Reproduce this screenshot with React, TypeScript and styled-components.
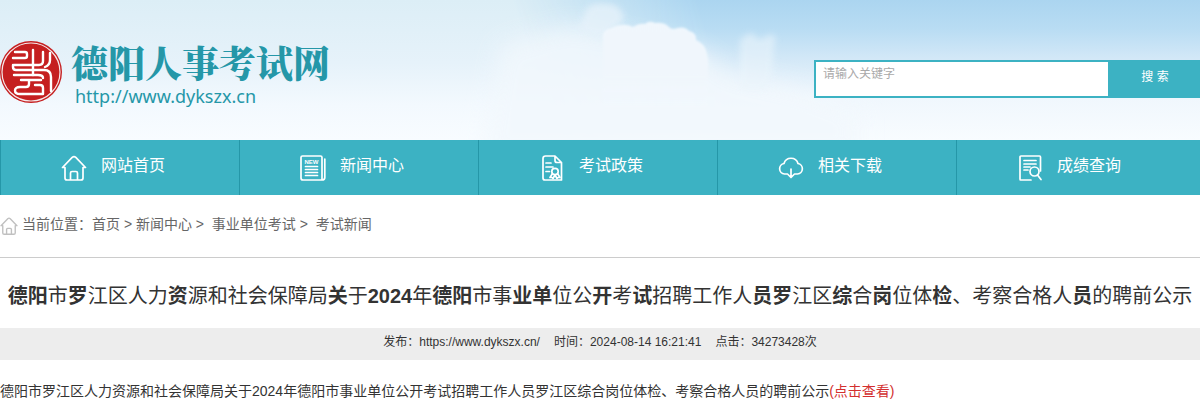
import React from 'react';
import styled, { createGlobalStyle } from 'styled-components';

const GlobalStyle = createGlobalStyle`
  * { box-sizing: border-box; }
  body {
    margin: 0;
    background: #fff;
    color: #333;
    font: 14px/24px "Liberation Sans", "Noto Sans CJK SC", sans-serif;
  }
  a { color: inherit; text-decoration: none; }
`;

const Header = styled.header`
  position: relative;
  height: 140px;
  overflow: hidden;
  display: flex;
  justify-content: space-between;
  background: linear-gradient(#dceef6, #e6f2fa 45%, #f3f9fe 75%, #f8fcff);
`;

const Sky = styled.svg`
  position: absolute;
  inset: 0;
  width: 100%;
  height: 100%;
`;

const Brand = styled.a`
  position: relative;
  display: flex;
  align-items: flex-start;
  gap: 9px;
  padding-top: 41px;
`;

const BrandText = styled.span`
  display: flex;
  flex-direction: column;
  color: #2597a8;
`;

const SiteName = styled.span`
  font: 900 37px/43px "Noto Serif CJK SC", "Noto Sans CJK SC", serif;
`;

const SiteUrl = styled.span`
  padding-left: 4px;
  font: 18px/24px "Noto Sans", sans-serif;
`;

const Search = styled.form`
  position: relative;
  display: flex;
  width: 386px;
  height: 38px;
  margin-top: 60px;
`;

const SearchInput = styled.input`
  flex: 1;
  min-width: 0;
  border: 2px solid #3cb2c3;
  border-right: 0;
  padding: 0 7px 11px;
  background: #fff;
  font: 12px/20px "Liberation Sans", "Noto Sans CJK SC", sans-serif;
  outline: 0;
  &::placeholder { color: #a9a9a9; opacity: 1; }
`;

const SearchButton = styled.button`
  width: 92px;
  border: 0;
  padding: 0 0 4px 2px;
  background: #3cb2c3;
  color: #fff;
  font: 12px/20px "Liberation Sans", "Noto Sans CJK SC", sans-serif;
`;

const Nav = styled.nav`
  display: grid;
  grid-template-columns: repeat(4, 239fr) 244fr;
  background: #3cb2c3;
`;

const NavItem = styled.a`
  display: flex;
  align-items: center;
  gap: 14px;
  height: 55px;
  padding-left: 60px;
  border-left: 1px solid #2597a8;
  color: #fff;
  font-size: 16px;
  line-height: 24px;
`;

const NavLabel = styled.span`
  padding-bottom: 4px;
`;

const Icon = styled.svg`
  flex: none;
  fill: none;
  stroke: currentColor;
  stroke-linecap: round;
  stroke-linejoin: round;
`;

const Breadcrumb = styled.nav`
  display: flex;
  align-items: center;
  gap: 4px;
  height: 63px;
  padding-bottom: 4px;
  border-bottom: 1px solid #ccc;
  color: #666;
  svg { color: #c0c0c0; margin-top: 4px; }
`;

const Trail = styled.span`
  white-space: pre;
`;

const Title = styled.h1`
  margin: 0;
  padding: 21px 0 15px;
  font-size: 20px;
  line-height: 34px;
  font-weight: 400;
  text-align: center;
  b { font-weight: 700; }
`;

const Meta = styled.div`
  display: flex;
  justify-content: center;
  gap: 14px;
  padding-bottom: 4px;
  background: #ededed;
  font-size: 12px;
  line-height: 28px;
`;

const Article = styled.p`
  margin: 0;
  padding-top: 19px;
`;

const DetailLink = styled.a`
  && { color: #d32f2f; }
`;

const HousePath = () => (
  <path d="M1.5 12.5 11.2 2.4q1.8-1.6 3.6 0L24.5 12.5H22V23q0 2-2 2H6q-2 0-2-2V12.5ZM9.5 25v-7q0-1.5 1.5-1.5h4q1.5 0 1.5 1.5v7" />
);

const navItems = [
  { label: '网站首页', icon: <HousePath /> },
  {
    label: '新闻中心',
    icon: (
      <>
        <path d="M2.500 1h18q1.500 0 1.500 1.500V25H3q-2 0-2-2V2.500Q1 1 2.500 1ZM22 25q2.800 0 2.800-2.500V4" />
        <path d="M5.500 11.500h12M5.500 14.500h12M5.500 17.500h12M5.500 20.500h12" />
        <text x="11.500" y="8.500" textAnchor="middle" fontSize="6" fontWeight="700" fill="currentColor" stroke="none">NEW</text>
      </>
    ),
  },
  {
    label: '考试政策',
    icon: (
      <>
        <path d="M16 1H6.500Q4 1 4 3.500V23q0 2 2 2h16.500V7.500Zm0 0v4.500q0 2 2 2h4.500M7 8h5M7 12h7M7 16.500h3.500" />
        <circle cx="16" cy="16.500" r="3.200" />
        <path d="m13.500 18.500-2.500 4h2l1 1 2-3.500 2 3.500 1-1h2l-2.500-4" />
      </>
    ),
  },
  {
    label: '相关下载',
    icon: (
      <path d="M9.500 19H6.500a5.300 5.300 0 0 1-.5-10.500 7.300 7.300 0 0 1 14 0 5.300 5.300 0 0 1-.5 10.500H16.500M13 14v8m-3-2.500 3 3 3-3" />
    ),
  },
  {
    label: '成绩查询',
    icon: (
      <>
        <path d="M14 25H3.500Q3 25 3 24V2Q3 1 4 1H22.500q1 0 1 1V16M7 5.500h12M7 9h12M7 12h6M7 15h4" />
        <circle cx="17.500" cy="16.500" r="4.500" />
        <path d="m20.500 20 3.500 4.500" />
      </>
    ),
  },
];

const Seal = () => (
  <svg width="62" height="62" viewBox="0 0 62 62" aria-hidden="true">
    <circle cx="31" cy="31" r="31" fill="#c51f20" />
    <circle cx="31" cy="31" r="29" fill="none" stroke="#f6e8e9" strokeWidth="1.200" />
    <g fill="none" stroke="#fff" strokeWidth="2.400" strokeLinecap="round" strokeLinejoin="round">
      <path d="M15 11h10q2 0 2 2v2q0 2-2 2H13M33 9v25M14 24h25q4 0 4-4v-9M50 12v7q0 5-5 7" />
      <path d="M13 24v2q0 3 3 3h28q7 0 7 7v14M14 34h24q5 0 5 3" />
      <path d="M21 39h20M29 39v4q0 3-3 3h-6q-5 0-5 3.500t5 3.500h23v-6q0-3-3-3h-5" />
    </g>
  </svg>
);

const titleParts: [string, boolean][] = [
  ['德阳', true], ['市', false], ['罗', true], ['江区人力', false], ['资', true],
  ['源和社会保障局', false], ['关', true], ['于', false], ['2024', true], ['年', false],
  ['德阳', true], ['市事', false], ['业单', true], ['位公', false], ['开', true],
  ['考', false], ['试', true], ['招聘工作人', false], ['员罗', true], ['江区', false],
  ['综', true], ['合', false], ['岗', true], ['位体', false], ['检', true],
  ['、考察合格人', false], ['员', true], ['的聘前公示', false],
];

export default function App() {
  return (
    <>
      <GlobalStyle />
      <Header>
        <Sky viewBox="0 0 1200 140" preserveAspectRatio="none" aria-hidden="true">
          <defs>
            <linearGradient id="blue" x1="0" y1="0" x2="0" y2="1">
              <stop offset="0" stopColor="#abd5f0" />
              <stop offset=".2" stopColor="#b8dcf3" />
              <stop offset=".42" stopColor="#d3e8f7" />
              <stop offset=".7" stopColor="#f0f7fd" />
              <stop offset="1" stopColor="#f8fcff" />
            </linearGradient>
            <linearGradient id="edge" gradientUnits="userSpaceOnUse" x1="530" y1="60" x2="700" y2="10">
              <stop offset="0" stopColor="#fff" stopOpacity="0" />
              <stop offset="1" stopColor="#fff" />
            </linearGradient>
            <linearGradient id="cloud" x1="0" y1="0" x2="0" y2="1">
              <stop offset="0" stopColor="#f0f7fd" />
              <stop offset=".5" stopColor="#f0f6fc" />
              <stop offset="1" stopColor="#f3f9fe" stopOpacity="0" />
            </linearGradient>
            <mask id="fade"><rect x="400" width="800" height="140" fill="url(#edge)" /></mask>
            <filter id="soft" filterUnits="userSpaceOnUse" x="300" y="-60" width="800" height="280">
              <feGaussianBlur stdDeviation="11" />
            </filter>
            <filter id="puff" filterUnits="userSpaceOnUse" x="500" y="-30" width="400" height="200">
              <feGaussianBlur stdDeviation="3" />
            </filter>
            <filter id="crisp"><feGaussianBlur stdDeviation="1" /></filter>
          </defs>
          <rect x="400" width="800" height="140" fill="url(#blue)" mask="url(#fade)" />
          <path filter="url(#soft)" fill="#f2f8fd" opacity=".8" d="M500 45 570 25 700 50 730 72 800 88 860 110 860 160H480Z" />
          <path filter="url(#puff)" fill="#e6f2fa" opacity=".8" d="M586 10q6-8 16-6 14-2 20 8 4 6-2 12l-20 14-22-8Z" />
          <path filter="url(#puff)" fill="#eaf4fb" opacity=".6" d="M740 48q-2-10 8-14 6-2 10 6l14-6q6 4 2 12l-2 30-6 14h-26Z" />
          <path filter="url(#crisp)" fill="url(#cloud)" d="M603 40q-2-10 8-12 12-6 22-1 6-4 12-3 4-4 10-1 8-1 13 3 2 3 6 3 10-4 15 2 8 2 7 9 8 4 10 10 3 10 2 18v47H603Z" />
        </Sky>
        <Brand href="#">
          <Seal />
          <BrandText>
            <SiteName>德阳人事考试网</SiteName>
            <SiteUrl>http://www.dykszx.cn</SiteUrl>
          </BrandText>
        </Brand>
        <Search>
          <SearchInput aria-label="请输入关键字" placeholder="请输入关键字" />
          <SearchButton type="button">搜 索</SearchButton>
        </Search>
      </Header>
      <Nav>
        {navItems.map(({ label, icon }) => (
          <NavItem href="#" key={label}>
            <Icon width="26" height="26" viewBox="0 0 26 26" strokeWidth="1.700" aria-hidden="true">{icon}</Icon>
            <NavLabel>{label}</NavLabel>
          </NavItem>
        ))}
      </Nav>
      <Breadcrumb>
        <Icon width="18" height="18" viewBox="0 0 26 26" strokeWidth="2" aria-hidden="true"><HousePath /></Icon>
        <Trail>
          当前位置：<a href="#">首页</a>{' > '}<a href="#">新闻中心</a>{' >  '}<a href="#">事业单位考试</a>{' >  '}<a href="#">考试新闻</a>
        </Trail>
      </Breadcrumb>
      <main>
        <Title>
          {titleParts.map(([text, strong], i) => (strong ? <b key={i}>{text}</b> : text))}
        </Title>
        <Meta>
          <span>发布：https://www.dykszx.cn/</span>
          <span>时间：2024-08-14 16:21:41</span>
          <span>点击：34273428次</span>
        </Meta>
        <Article>
          德阳市罗江区人力资源和社会保障局关于2024年德阳市事业单位公开考试招聘工作人员罗江区综合岗位体检、考察合格人员的聘前公示<DetailLink href="#">(点击查看)</DetailLink>
        </Article>
      </main>
    </>
  );
}
